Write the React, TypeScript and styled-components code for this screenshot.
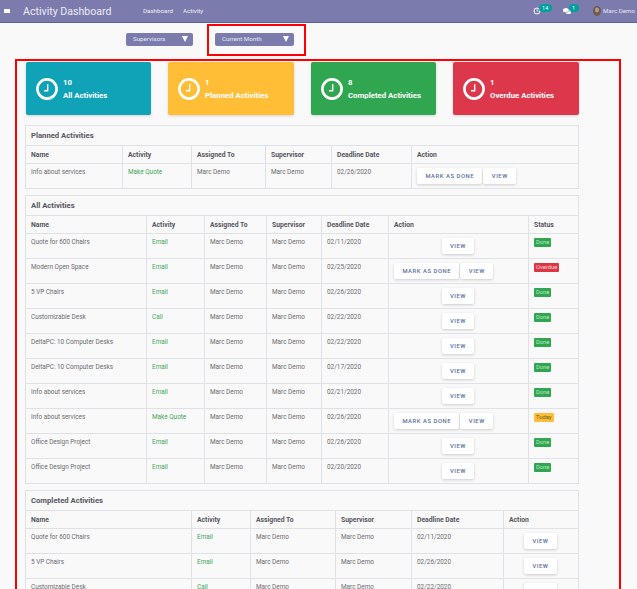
import React from 'react';
import styled, { createGlobalStyle } from 'styled-components';
import { FaComments } from 'react-icons/fa';

const GlobalStyle = createGlobalStyle`
  html, body {
    margin: 0;
    padding: 0;
    height: 100%;
    overflow: hidden;
    background: #f9f9f9;
  }
  #root {
    height: 589px;
    overflow: hidden;
    font-family: Roboto, "Liberation Sans", sans-serif;
  }
`;

const Page = styled.div`
  position: relative;
  width: 637px;
  height: 589px;
  overflow: hidden;
`;

const Navbar = styled.header`
  display: flex;
  align-items: center;
  height: 22px;
  border-bottom: 1px solid #5f5e97;
  background: #7c7bad;
  color: #fff;
`;

const AppsIcon = styled.div`
  display: grid;
  grid-template-columns: 3px 3px;
  grid-auto-rows: 2px;
  gap: 0.6px 0;
  margin: 0 13px 0 4px;
  span {
    width: 2.6px;
    height: 2px;
    background: #fff;
  }
`;

const Brand = styled.div`
  width: 120px;
  font-size: 10.6px;
  color: #ecebf5;
`;

const NavLink = styled.a`
  margin-right: 10px;
  font-size: 6.2px;
  color: #f0f0f7;
`;

const NavRight = styled.div`
  display: flex;
  align-items: center;
  margin-left: auto;
  padding-right: 2px;
  font-size: 6.2px;
  white-space: nowrap;
  color: #e6e6f1;
`;

const NavIcon = styled.div`
  position: relative;
  display: flex;
  width: 8px;
  height: 8px;
  margin-right: 22px;
`;

const Badge = styled.span`
  position: absolute;
  top: -3px;
  left: 5.5px;
  padding: 0 3.5px;
  height: 8px;
  border-radius: 4px;
  background: #00a09d;
  font-size: 5.4px;
  line-height: 8px;
  color: #fff;
`;

const Avatar = styled.svg`
  width: 8px;
  height: 10px;
  margin-right: 2px;
`;

const Filters = styled.div`
  display: flex;
  height: 39px;
  padding: 10px 0 0 126px;
  box-sizing: border-box;
`;

const Select = styled.div<{ $w: number; $ml?: number }>`
  position: relative;
  box-sizing: border-box;
  width: ${(p) => p.$w}px;
  height: 13px;
  margin-left: ${(p) => p.$ml ?? 0}px;
  padding-left: 7px;
  border-radius: 2px;
  background: #7c7bad;
  font-size: 6.2px;
  line-height: 13px;
  color: #e9e9f3;
`;

const Caret = styled.span`
  position: absolute;
  top: 3px;
  right: 5px;
  border-top: 6px solid #fff;
  border-left: 3px solid transparent;
  border-right: 3px solid transparent;
`;

const Cards = styled.div`
  display: grid;
  grid-template-columns: 125px 126px 125px 126px;
  gap: 17px;
  margin: 0 0 10px 26px;
  width: 553px;
`;

const Card = styled.div<{ $bg: string }>`
  display: flex;
  align-items: center;
  height: 53px;
  padding-left: 10px;
  box-sizing: border-box;
  border-radius: 2px;
  background: ${(p) => p.$bg};
  box-shadow: 0 1px 3px rgba(0, 0, 0, 0.15);
  color: #fff;
`;

const CardText = styled.div`
  margin-left: 5px;
  font-size: 7.8px;
  font-weight: 700;
  line-height: 13px;
`;

const Panel = styled.section`
  width: 553px;
  margin: 0 0 6px 25px;
`;

const Table = styled.table`
  width: 100%;
  table-layout: fixed;
  border-collapse: collapse;
  font-size: 6.4px;
  color: #6b6b70;
`;

const Title = styled.th`
  height: 20px;
  padding: 0 5px;
  box-sizing: border-box;
  border: 1px solid #dee2e6;
  font-size: 7.7px;
  font-weight: 700;
  text-align: left;
  color: #555560;
`;

const Head = styled.th`
  height: 18px;
  padding: 0 5px;
  box-sizing: border-box;
  border: 1px solid #dee2e6;
  font-size: 6.8px;
  font-weight: 700;
  text-align: left;
  color: #555560;
`;

const Cell = styled.td<{ $center?: boolean }>`
  height: 25px;
  padding: 4px 5px 0;
  box-sizing: border-box;
  border: 1px solid #dee2e6;
  vertical-align: top;
  text-align: ${(p) => (p.$center ? 'center' : 'left')};
`;

const Kind = styled.span`
  color: #3aa85a;
`;

const Button = styled.button`
  height: 16px;
  margin: 0 1px 0 0;
  padding: 0 8.4px;
  border: 0;
  border-radius: 2px;
  background: #fff;
  box-shadow: 0 1px 3px rgba(0, 0, 0, 0.18);
  font-family: inherit;
  font-size: 5.8px;
  font-weight: 500;
  letter-spacing: 0.58px;
  text-transform: uppercase;
  color: #566f9f;
`;

const Status = styled.span<{ $bg: string; $fg: string }>`
  display: inline-block;
  padding: 0 2px;
  height: 9px;
  border-radius: 1px;
  background: ${(p) => p.$bg};
  font-size: 5.8px;
  line-height: 8px;
  color: ${(p) => p.$fg};
`;

const Marker = styled.div<{ $x: number; $y: number; $w: number; $h: number }>`
  position: absolute;
  left: ${(p) => p.$x}px;
  top: ${(p) => p.$y}px;
  width: ${(p) => p.$w}px;
  height: ${(p) => p.$h}px;
  box-sizing: border-box;
  border: 2px solid #f00;
  pointer-events: none;
`;

const Clock = () => (
  <svg width="22" height="22" viewBox="0 0 22 22" fill="none" stroke="#fff">
    <circle cx="11" cy="11" r="9.6" strokeWidth="2.6" />
    <path d="M11.7 6.3v6.4H8" strokeWidth="1.4" />
  </svg>
);

type Row = {
  name: string;
  kind: string;
  date: string;
  open?: boolean;
  status?: 'Done' | 'Overdue' | 'Today';
};

const statusColors = {
  Done: { bg: '#2fa64f', fg: '#b8e6c4' },
  Overdue: { bg: '#dc3545', fg: '#f8d7da' },
  Today: { bg: '#ffbe36', fg: '#6f5a20' },
};

const ActivityPanel = ({
  title,
  cols,
  rows,
  showStatus,
}: {
  title: string;
  cols: number[];
  rows: Row[];
  showStatus?: boolean;
}) => {
  const heads = ['Name', 'Activity', 'Assigned To', 'Supervisor', 'Deadline Date', 'Action'];
  if (showStatus) heads.push('Status');
  return (
    <Panel>
      <Table>
        <colgroup>
          {cols.map((w, i) => (
            <col key={i} style={{ width: w }} />
          ))}
        </colgroup>
        <thead>
          <tr>
            <Title colSpan={heads.length}>{title}</Title>
          </tr>
          <tr>
            {heads.map((h) => (
              <Head key={h}>{h}</Head>
            ))}
          </tr>
        </thead>
        <tbody>
          {rows.map((r, i) => (
            <tr key={i}>
              <Cell>{r.name}</Cell>
              <Cell>
                <Kind>{r.kind}</Kind>
              </Cell>
              <Cell>Marc Demo</Cell>
              <Cell>Marc Demo</Cell>
              <Cell>{r.date}</Cell>
              <Cell $center={!r.open}>
                {r.open && <Button>Mark as done</Button>}
                <Button>View</Button>
              </Cell>
              {showStatus && (
                <Cell>
                  {r.status && (
                    <Status $bg={statusColors[r.status].bg} $fg={statusColors[r.status].fg}>
                      {r.status}
                    </Status>
                  )}
                </Cell>
              )}
            </tr>
          ))}
        </tbody>
      </Table>
    </Panel>
  );
};

const planned: Row[] = [{ name: 'Info about services', kind: 'Make Quote', date: '02/26/2020', open: true }];

const all: Row[] = [
  { name: 'Quote for 600 Chairs', kind: 'Email', date: '02/11/2020', status: 'Done' },
  { name: 'Modern Open Space', kind: 'Email', date: '02/25/2020', status: 'Overdue', open: true },
  { name: '5 VP Chairs', kind: 'Email', date: '02/26/2020', status: 'Done' },
  { name: 'Customizable Desk', kind: 'Call', date: '02/22/2020', status: 'Done' },
  { name: 'DeltaPC: 10 Computer Desks', kind: 'Email', date: '02/22/2020', status: 'Done' },
  { name: 'DeltaPC: 10 Computer Desks', kind: 'Email', date: '02/17/2020', status: 'Done' },
  { name: 'Info about services', kind: 'Email', date: '02/21/2020', status: 'Done' },
  { name: 'Info about services', kind: 'Make Quote', date: '02/26/2020', status: 'Today', open: true },
  { name: 'Office Design Project', kind: 'Email', date: '02/26/2020', status: 'Done' },
  { name: 'Office Design Project', kind: 'Email', date: '02/20/2020', status: 'Done' },
];

const completed: Row[] = [
  { name: 'Quote for 600 Chairs', kind: 'Email', date: '02/11/2020' },
  { name: '5 VP Chairs', kind: 'Email', date: '02/26/2020' },
  { name: 'Customizable Desk', kind: 'Call', date: '02/22/2020' },
];

const cards = [
  { n: 10, label: 'All Activities', bg: '#10a2b7' },
  { n: 1, label: 'Planned Activities', bg: '#ffbe36' },
  { n: 8, label: 'Completed Activities', bg: '#2fa64f' },
  { n: 1, label: 'Overdue Activities', bg: '#dd374c' },
];

export default function App() {
  return (
    <Page>
      <GlobalStyle />
      <Navbar>
        <AppsIcon>
          <span />
          <span />
          <span />
          <span />
        </AppsIcon>
        <Brand>Activity Dashboard</Brand>
        <NavLink>Dashboard</NavLink>
        <NavLink>Activity</NavLink>
        <NavRight>
          <NavIcon>
            <svg width="8" height="8" viewBox="0 0 8 8" fill="none" stroke="#fff">
              <circle cx="4" cy="4" r="3" strokeWidth="1" />
              <path d="M4 2.2V4h1.5" strokeWidth="0.7" />
            </svg>
            <Badge>14</Badge>
          </NavIcon>
          <NavIcon>
            <FaComments size={8} color="#fff" />
            <Badge>1</Badge>
          </NavIcon>
          <Avatar viewBox="0 0 8 10">
            <ellipse cx="4" cy="5" rx="4" ry="5" fill="#6f5a50" />
            <ellipse cx="4" cy="4" rx="2" ry="2.4" fill="#b79a88" />
          </Avatar>
          Marc Demo
        </NavRight>
      </Navbar>

      <Filters>
        <Select $w={67}>
          Supervisors
          <Caret />
        </Select>
        <Select $w={79} $ml={22}>
          Current Month
          <Caret />
        </Select>
      </Filters>

      <Cards>
        {cards.map((c) => (
          <Card key={c.label} $bg={c.bg}>
            <Clock />
            <CardText>
              <div>{c.n}</div>
              <div>{c.label}</div>
            </CardText>
          </Card>
        ))}
      </Cards>

      <ActivityPanel title="Planned Activities" cols={[97, 69, 74, 66, 80, 167]} rows={planned} />
      <ActivityPanel
        title="All Activities"
        cols={[121, 58, 62, 55, 67, 140, 50]}
        rows={all}
        showStatus
      />
      <ActivityPanel title="Completed Activities" cols={[166, 59, 85, 76, 92, 75]} rows={completed} />

      <Marker $x={207} $y={24} $w={99} $h={32} />
      <Marker $x={15} $y={59} $w={606} $h={600} />
    </Page>
  );
}
